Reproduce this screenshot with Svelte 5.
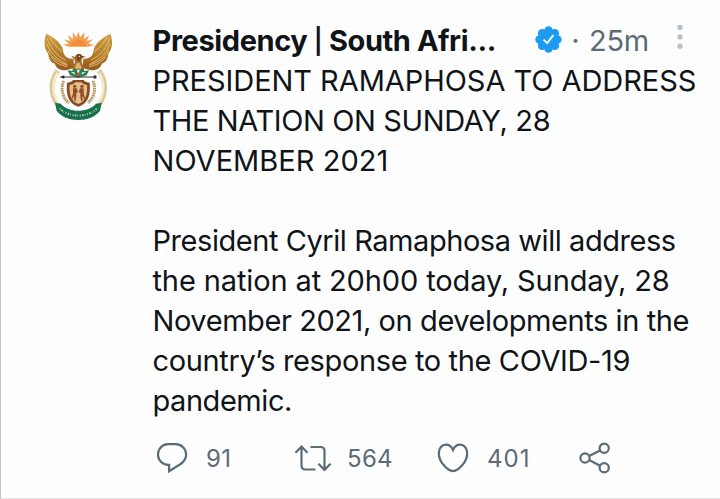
<script>
  const title = [
    { text: 'PRESIDENT RAMAPHOSA TO ADDRESS', spacing: -0.05 },
    { text: 'THE NATION ON SUNDAY, 28', spacing: -0.38 },
    { text: 'NOVEMBER 2021', spacing: 0.03 }
  ]

  const message = [
    { text: 'President Cyril Ramaphosa will address', spacing: -0.44 },
    { text: 'the nation at 20h00 today, Sunday, 28', spacing: -0.12 },
    { text: 'November 2021, on developments in the', spacing: -0.42 },
    { text: 'country’s response to the COVID-19', spacing: -0.37 },
    { text: 'pandemic.', spacing: -0.45 }
  ]
</script>

<article class="tweet">
  <svg class="avatar" viewBox="0 0 300 330" role="img" aria-label="Coat of arms">
    <defs>
      <linearGradient id="wing" x1="0" y1="0" x2="0" y2="1">
        <stop offset="0" stop-color="#cf9f45" />
        <stop offset="0.55" stop-color="#b57c2a" />
        <stop offset="1" stop-color="#96581c" />
      </linearGradient>
    </defs>
    <!-- rising sun -->
    <path fill="#f5a04f" d="M102 74l17-3-14-13 19 5-8-17 16 11-1-20 11 15 6-17 6 17 12-15-1 20 16-11-8 17 19-5-14 13 17 3-17 6H119z" />
    <path fill="#f08c3c" d="M124 79a24 20 0 0 1 48 0z" />
    <!-- tusks and wheat -->
    <g fill="none">
      <path stroke="#ddca96" stroke-width="15" d="M86 152C58 190 66 238 99 267M210 152c28 38 20 86-13 115" />
      <path stroke="#f6efd8" stroke-width="6" d="M85 159C65 192 70 234 98 259M211 159c20 33 15 75-13 100" />
      <path stroke="#b49360" stroke-width="9" stroke-dasharray="5 2" d="M104 183c-10 26-3 49 15 66M192 183c10 26 3 49-15 66" />
    </g>
    <!-- wings -->
    <path fill="url(#wing)" d="M52 41c-9 24-6 46 6 60 1 17 9 27 20 30 2 13 16 20 32 20l26-7-3-28c-20 2-29-10-31-25C99 73 83 57 52 41z" />
    <path fill="url(#wing)" d="M244 41c9 24 6 46-6 60-1 17-9 27-20 30-2 13-16 20-32 20l-26-7 3-28c20 2 29-10 31-25 3-18 19-34 50-50z" />
    <g fill="none" stroke="#e9cb85" stroke-width="2.5">
      <path d="M54 55c8 24 24 49 56 66M53 71c8 22 26 45 60 61M56 90c9 19 29 36 60 46M66 111c12 16 27 24 48 29M60 50c10 17 25 34 39 45" />
      <path d="M242 55c-8 24-24 49-56 66M243 71c-8 22-26 45-60 61M240 90c-9 19-29 36-60 46M230 111c-12 16-27 24-48 29M236 50c-10 17-25 34-39 45" />
    </g>
    <!-- bird -->
    <path fill="#a66d2c" d="M132 115l-5-7 11 2c4-12 21-12 22 0 0 8-4 12-1 19l6 16-17 13-17-13 6-17c2-6 0-9-5-13z" />
    <path fill="#7b4620" d="M143 105c4-5 13-4 15 2l13 4-14 3-8 11-6-7z" />
    <circle cx="151" cy="109" r="2" fill="#fff" />
    <path fill="#e2b66a" d="M144 128l-6 16 10 7 10-7-6-16z" />
    <!-- protea -->
    <path fill="#2b8156" d="M116 151l14 2 2-9 10 7 6-8 6 8 10-7 2 9 14-2-7 15-25 7-25-7z" />
    <path fill="#fff" d="M126 156l10 1 3 7zM170 156l-10 1-3 7zM144 152l4-5 4 5-4 9z" />
    <path fill="#c8553a" d="M140 163l8-5 8 5-8 7z" />
    <!-- spear and knobkierie -->
    <path stroke="#332c29" stroke-width="3" d="M99 171h96" />
    <path fill="#332c29" d="M91 171l15-5v10z" />
    <circle cx="198" cy="171" r="5" fill="#332c29" />
    <!-- shield -->
    <path fill="#884a24" d="M114 188q15-1 18-8h32q3 7 18 8c3 36-3 62-34 72-31-10-37-36-34-72z" />
    <path fill="#e4c18b" d="M122 195q13-2 16-8h20q3 6 16 8c2 30-4 48-26 57-22-9-28-27-26-57z" />
    <g fill="#934b26">
      <circle cx="137" cy="199" r="5" />
      <circle cx="159" cy="199" r="5" />
      <path d="M132 205h11l4 12-5 1v10l-2 15-4-1-1-15-5 11-3-3 5-14zM164 205h-11l-4 12 5 1v10l2 15 4-1 1-15 5 11 3-3-5-14z" />
    </g>
    <!-- motto ribbon -->
    <path fill="#17714c" d="M78 248l17 3c23 28 83 28 106 0l17-3-5 24c-27 37-103 37-130 0z" />
    <path fill="none" stroke="#a8cbae" stroke-width="6" stroke-dasharray="3 4 5 3 2 5" d="M92 265c26 29 86 29 112 0" />
  </svg>

  <div class="content">
    <header>
      <strong>Presidency <span class="bar">|</span> South Afri...</strong>
      <svg class="verified" viewBox="0 0 27 27" role="img" aria-label="Verified">
        <g fill="#1d9bf0">
          <circle cx="13.5" cy="13.5" r="10.5" />
          <circle cx="13.5" cy="4.6" r="4.3" />
          <circle cx="19.8" cy="7.2" r="4.3" />
          <circle cx="22.4" cy="13.5" r="4.3" />
          <circle cx="19.8" cy="19.8" r="4.3" />
          <circle cx="13.5" cy="22.4" r="4.3" />
          <circle cx="7.2" cy="19.8" r="4.3" />
          <circle cx="4.6" cy="13.5" r="4.3" />
          <circle cx="7.2" cy="7.2" r="4.3" />
        </g>
        <path fill="none" stroke="#fff" stroke-width="1.9" d="M8.6 13.6l3.5 3.5 6.3-8" />
      </svg>
      <span class="dot">·</span>
      <time>25m</time>
      <svg class="more" viewBox="0 0 6 26" aria-label="More">
        <circle cx="3" cy="3.5" r="2.7" />
        <circle cx="3" cy="12.9" r="2.7" />
        <circle cx="3" cy="22.2" r="2.7" />
      </svg>
    </header>

    <p>
      {#each title as line}
      <span style="letter-spacing: {line.spacing}px">{line.text}</span>
      {/each}
    </p>
    <p>
      {#each message as line}
      <span style="letter-spacing: {line.spacing}px">{line.text}</span>
      {/each}
    </p>

    <footer>
      <div class="action reply">
        <svg width="32" height="32" viewBox="0 0 32 32">
          <path d="M12.2 2.200h7.400c5.900 0 10.500 4.600 10.500 10.300 0 3.900-2.100 7.200-5.500 9.500L13.100 29.200v-6.400h-.9C6.300 22.800 2 18.200 2 12.500 2 6.800 6.300 2.200 12.200 2.200z" />
        </svg>
        <span>91</span>
      </div>
      <div class="action retweet">
        <svg width="38" height="32" viewBox="0 0 38 32">
          <path d="M1.500 10.700l6-6.200 6 6.200M7.500 5v18.500q0 4 4 4h10M16.500 5h10q4 0 4 4v18M24.500 21.700l6 6.200 6-6.200" />
        </svg>
        <span>564</span>
      </div>
      <div class="action like">
        <svg width="32" height="32" viewBox="0 0 32 32">
          <path d="M16 29.100C10.500 28.800 1.800 20 1.800 11.200 1.800 6 5 2.700 9 2.700c3.200 0 5.600 2.200 7 5.300 1.400-3.100 3.800-5.300 7-5.300 4 0 7.200 3.300 7.200 8.500 0 8.800-8.700 17.600-14.200 17.900z" />
        </svg>
        <span>401</span>
      </div>
      <div class="action share">
        <svg width="32" height="32" viewBox="0 0 32 32">
          <circle cx="6" cy="16" r="4.600" />
          <circle cx="25.200" cy="6.300" r="4.600" />
          <circle cx="25.200" cy="25.800" r="4.600" />
          <path d="M10.100 13.900l11-5.500M10.100 18.100l11 5.600" />
        </svg>
      </div>
    </footer>
  </div>
</article>

<style>
  :global(body) {
    background: #fefefe;
  }

  .tweet {
    box-sizing: border-box;
    display: flex;
    height: 499px;
    padding: 20px 0 0 28px;
    border-left: 1px solid #c2c2c2;
    border-bottom: 1px solid #e1e5e6;
    overflow: hidden;
    color: #0f1419;
    font-family: Inter, "Liberation Sans", sans-serif;
    font-size: 29px;
    line-height: 40px;
  }

  .avatar {
    flex: none;
    width: 100px;
    height: 110px;
  }

  .content {
    width: 567px;
    margin-left: 23.5px;
    padding-top: 1px;
  }

  header {
    display: flex;
    height: 40px;
    white-space: nowrap;
  }

    header strong {
      width: 382.5px;
      font-weight: 700;
      letter-spacing: -0.4px;
    }

  .bar {
    font-size: 25px;
    font-weight: 600;
    vertical-align: 1px;
    line-height: 1;
  }

  .verified {
    width: 27px;
    height: 27px;
    margin-top: 5px;
  }

  .dot,
  time {
    color: #5b6b77;
  }

  .dot {
    width: 27px;
    text-align: center;
  }

  time {
    width: 88px;
    letter-spacing: -0.3px;
  }

  .more {
    width: 6px;
    height: 26px;
    margin-top: 3px;
    fill: #b7c1c8;
  }

  p {
    margin: 0 0 40px;
    white-space: nowrap;
  }

    p span {
      display: block;
    }

  footer {
    display: flex;
    margin-top: -19px;
    color: #5b6b77;
    font-size: 24px;
    line-height: 34px;
  }

  .action {
    display: flex;
  }

    .action svg {
      flex: none;
      fill: none;
      stroke: currentColor;
      stroke-width: 2.2;
    }

    .action span {
      margin-left: 18px;
      letter-spacing: 0.3px;
    }

  .reply {
    width: 138px;
    margin-left: 3.5px;
  }

  .retweet {
    width: 143px;
  }

  .retweet span {
    margin-left: 15px;
  }

  .like {
    width: 142px;
  }

  .like span {
    letter-spacing: 1.1px;
  }
</style>
